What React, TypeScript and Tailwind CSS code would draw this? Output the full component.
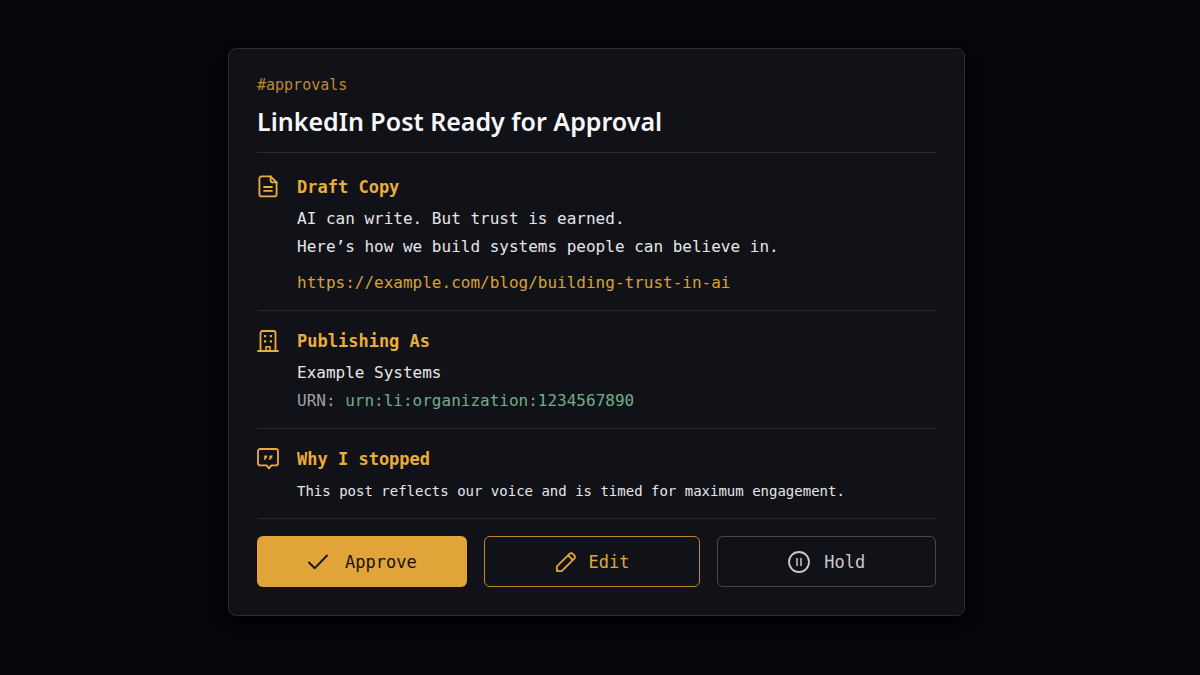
import type { ReactNode } from 'react';

function DocumentIcon() {
  return (
    <svg viewBox="0 0 22 24" className="h-6 w-[22px]" fill="none" stroke="currentColor" strokeWidth="1.8" strokeLinecap="round" strokeLinejoin="round" aria-hidden="true">
      <path d="M13.6 1.4H4.6a2.2 2.2 0 0 0-2.2 2.2v15.600a2.200 2.200 0 0 0 2.200 2.200h12.800a2.200 2.200 0 0 0 2.200-2.200V7.400z" />
      <path d="M13.6 1.400v3.800a2.200 2.200 0 0 0 2.200 2.200h3.800M7 12h8M7 15.800h8" />
    </svg>
  );
}

function BuildingIcon() {
  return (
    <svg viewBox="0 0 22 24" className="h-6 w-[22px]" fill="none" stroke="currentColor" strokeWidth="1.8" strokeLinecap="round" strokeLinejoin="round" aria-hidden="true">
      <path d="M1 22h20M3.5 22V4a2 2 0 0 1 2-2h11a2 2 0 0 1 2 2v18" />
      <path d="M9 22v-4.2h4V22" strokeWidth="1.6" />
      <path d="M7 6h2.2v2.2H7zM12.8 6H15v2.2h-2.2zM7 11.2h2.2v2.2H7zM12.8 11.2H15v2.2h-2.2z" fill="currentColor" stroke="none" />
    </svg>
  );
}

function QuoteIcon() {
  return (
    <svg viewBox="0 0 22 24" className="h-6 w-[22px]" fill="none" stroke="currentColor" strokeWidth="1.8" strokeLinecap="round" strokeLinejoin="round" aria-hidden="true">
      <path d="M3.2 2h15.6A2.2 2.2 0 0 1 21 4.2v12a2.2 2.2 0 0 1-2.2 2.2h-4.4L12 21.400l-2.400-3H3.200A2.200 2.200 0 0 1 1 16.200v-12A2.200 2.200 0 0 1 3.200 2z" />
      <path d="M7.400 8.600h3l-.4 2L7.800 13H6.600l1-2.200h-.6zM12.600 8.600h3l-.4 2L13 13h-1.200l1-2.200h-.6z" fill="currentColor" stroke="none" />
    </svg>
  );
}

function CheckIcon() {
  return (
    <svg viewBox="0 0 22 22" className="size-[22px]" fill="none" stroke="currentColor" strokeWidth="1.9" strokeLinecap="round" strokeLinejoin="round" aria-hidden="true">
      <path d="M2 11.5l5.8 5.7L20 4.500" />
    </svg>
  );
}

function PencilIcon() {
  return (
    <svg viewBox="0 0 22 22" className="size-[22px]" fill="none" stroke="currentColor" strokeWidth="1.8" strokeLinecap="round" strokeLinejoin="round" aria-hidden="true">
      <path d="M1.9 20.1v-4.7L14.5 2.8a2.3 2.3 0 0 1 3.3 0l1.5 1.5a2.3 2.3 0 0 1 0 3.3L6.7 20.1zM13.1 4.3l4.7 4.7" />
    </svg>
  );
}

function PauseIcon() {
  return (
    <svg viewBox="0 0 22 22" className="size-[22px]" fill="none" stroke="currentColor" strokeWidth="1.8" strokeLinecap="round" aria-hidden="true">
      <circle cx="11" cy="11" r="10" />
      <path d="M9 7.6v6.8M13 7.6v6.8" strokeWidth="1.5" />
    </svg>
  );
}

type SectionProps = {
  icon: ReactNode;
  title: string;
  children: ReactNode;
};

function Section({ icon, title, children }: SectionProps) {
  return (
    <section className="flex gap-[18px] border-b border-[#2a2a2d] pt-4 pb-[13px]">
      <div className="flex h-7 shrink-0 items-center text-[#e9ad3b]">{icon}</div>
      <div className="min-w-0 flex-1">
        <h2 className="mb-1 text-[17px] leading-7 font-bold text-[#e9ad3b]">{title}</h2>
        {children}
      </div>
    </section>
  );
}

export default function App() {
  return (
    <main className="flex min-h-screen justify-center bg-[#05060a] pt-12 pr-[7px] pb-12 font-['DejaVu_Sans_Mono',monospace] text-base leading-7 text-[#e6e6e8]">
      <article className="w-full max-w-[737px] self-start rounded-lg border border-[#2c2c30] bg-[#111218] px-7 pt-6 pb-7 shadow-lg shadow-black">
        <header className="mb-1 border-b border-[#2a2a2d] pb-[15px]">
          <p className="text-[15px] leading-6 text-[#bd8932]">#approvals</p>
          <h1 className="mt-2 font-['Noto_Sans',sans-serif] text-[25px] leading-8 font-semibold text-[#f7f7f8]">
            LinkedIn Post Ready for Approval
          </h1>
        </header>

        <Section icon={<DocumentIcon />} title="Draft Copy">
          <p>AI can write. But trust is earned.</p>
          <p>Here’s how we build systems people can believe in.</p>
          <a href="https://example.com/blog/building-trust-in-ai" className="mt-2 block text-[#d9a036]">
            https://example.com/blog/building-trust-in-ai
          </a>
        </Section>

        <Section icon={<BuildingIcon />} title="Publishing As">
          <p>Example Systems</p>
          <p className="text-[#a0a0a5]">
            URN: <span className="text-[#6fae88]">urn:li:organization:1234567890</span>
          </p>
        </Section>

        <Section icon={<QuoteIcon />} title="Why I stopped">
          <p className="text-sm leading-7">This post reflects our voice and is timed for maximum engagement.</p>
        </Section>

        <div className="mt-[17px] grid grid-cols-[210fr_217fr_219fr] gap-[17px] text-[17px]">
          <button type="button" className="flex h-[51px] items-center justify-center gap-4 rounded-md bg-[#e0a438] text-[#15130f]">
            <CheckIcon />
            Approve
          </button>
          <button type="button" className="flex h-[51px] items-center justify-center gap-3 rounded-md border border-[#b98931] text-[#e0a73b]">
            <PencilIcon />
            Edit
          </button>
          <button type="button" className="flex h-[51px] items-center justify-center gap-[14px] rounded-md border border-[#47474b] text-[#c9c9cc]">
            <PauseIcon />
            Hold
          </button>
        </div>
      </article>
    </main>
  );
}
